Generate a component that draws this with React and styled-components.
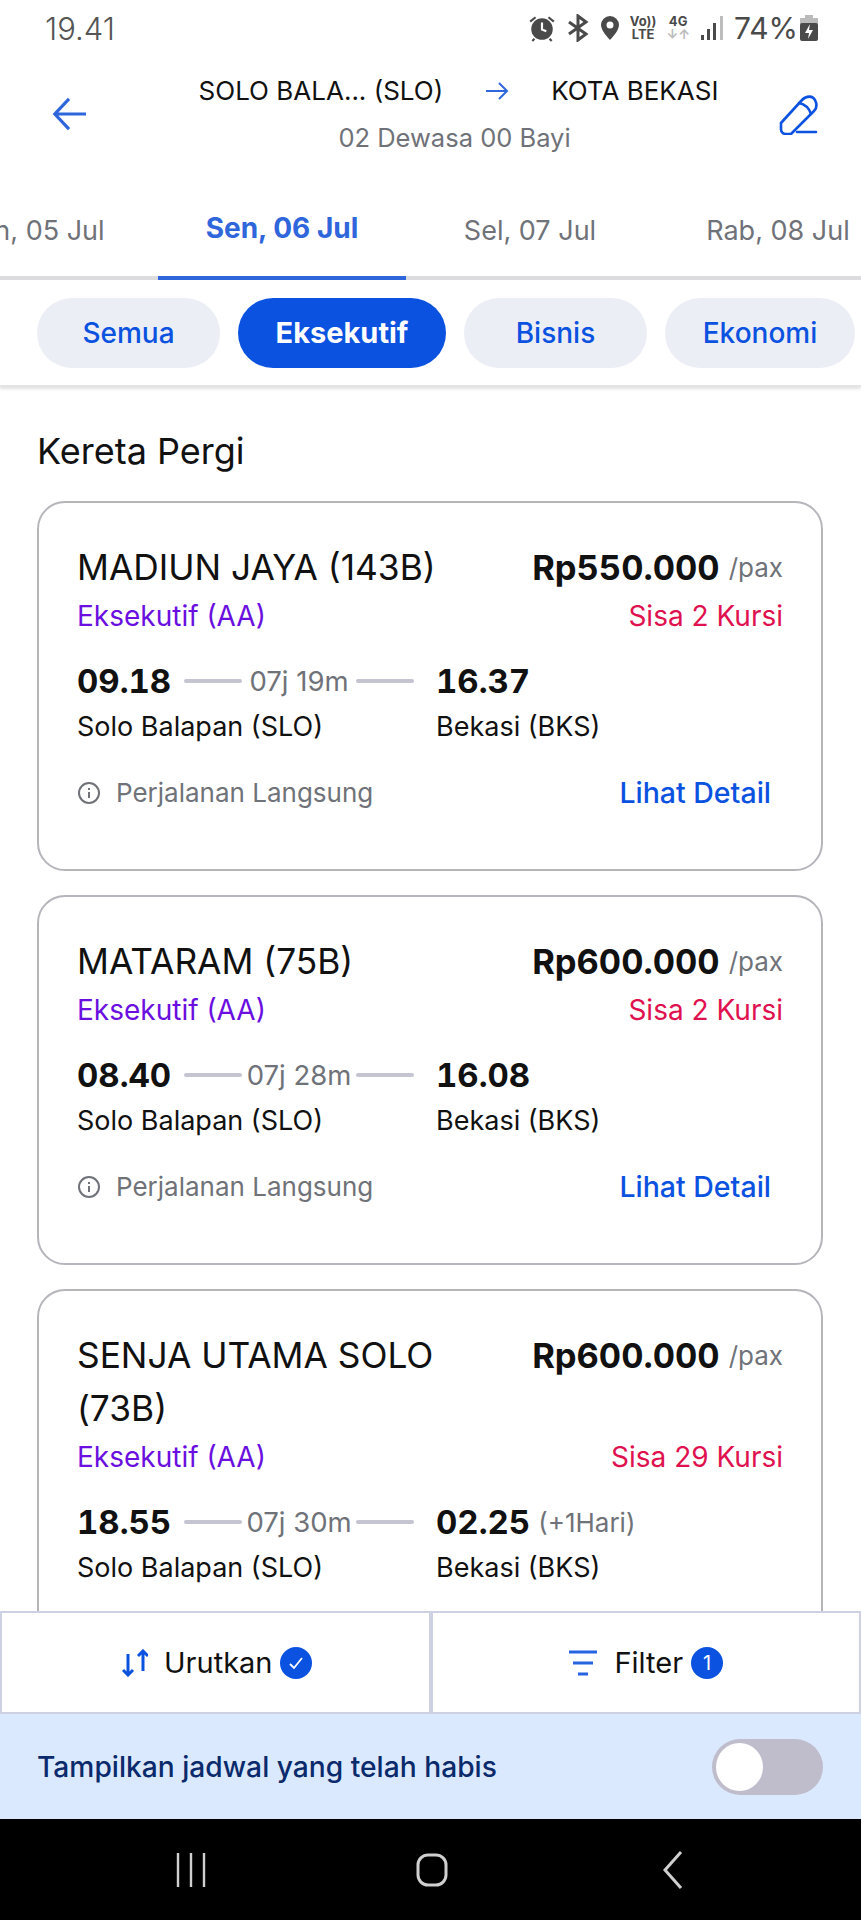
import React from 'react';
import styled, { createGlobalStyle } from 'styled-components';

const GlobalStyle = createGlobalStyle`
  * { box-sizing: border-box; }
  html, body { margin: 0; padding: 0; background: #fff; }
  body { font-family: 'Inter', 'Liberation Sans', sans-serif; }
`;

const trains = [
  { name: 'MADIUN JAYA (143B)', price: 'Rp550.000', seats: 'Sisa 2 Kursi', dep: '09.18', dur: '07j 19m', arr: '16.37', foot: true },
  { name: 'MATARAM (75B)', price: 'Rp600.000', seats: 'Sisa 2 Kursi', dep: '08.40', dur: '07j 28m', arr: '16.08', foot: true },
  // last card runs under the bottom bar, its footer is never on screen
  { name: 'SENJA UTAMA SOLO (73B)', price: 'Rp600.000', seats: 'Sisa 29 Kursi', dep: '18.55', dur: '07j 30m', arr: '02.25', next: '(+1Hari)' },
];

const App = () => (
  <Screen>
    <GlobalStyle />
    <StatusBar>
      <Clock>19.41</Clock>
      <StatusIcons>
        <svg width="28" height="28" viewBox="0 0 26 26" fill="#4a4a4a">
          <circle cx="13" cy="14" r="10" />
          <path d="M13 8v6.5l4 1.5" stroke="#fff" strokeWidth="2" fill="none" />
          <path d="M2 7l5-4M24 7l-5-4M6 23l-2 2M20 23l2 2" stroke="#4a4a4a" strokeWidth="2" />
        </svg>
        <svg width="24" height="28" viewBox="0 0 24 28" fill="none" stroke="#4a4a4a" strokeWidth="3">
          <path d="M3 8l17 12-8 6V2l8 6L3 20" />
        </svg>
        <svg width="20" height="26" viewBox="0 0 20 26">
          <path fillRule="evenodd" fill="#4a4a4a" d="M10 1a9 9 0 0 1 9 9c0 6-9 15-9 15S1 16 1 10a9 9 0 0 1 9-9zm0 5.5a3.5 3.5 0 1 0 0 7 3.5 3.5 0 0 0 0-7z" />
        </svg>
        <NetLabel>Vo))<br />LTE</NetLabel>
        <NetLabel>4G<Faint><br />↓↑</Faint></NetLabel>
        <svg width="24" height="24" viewBox="0 0 24 24">
          <rect x="1" y="19" width="3" height="5" fill="#4a4a4a" />
          <rect x="7" y="13" width="3" height="11" fill="#4a4a4a" />
          <rect x="13" y="7" width="3" height="17" fill="#4a4a4a" />
          <rect x="20" y="0" width="3" height="24" fill="#bdbdbd" />
        </svg>
        <Percent>74%</Percent>
        <svg width="18" height="26" viewBox="0 0 18 26">
          <rect x="5" y="0" width="8" height="4" fill="#bbb" />
          <rect x="0" y="3" width="18" height="6" fill="#bbb" />
          <rect x="0" y="8" width="18" height="18" rx="2" fill="#4a4a4a" />
          <path d="M10 9l-5 9h4l-1 6 5-9H9z" fill="#fff" />
        </svg>
      </StatusIcons>
    </StatusBar>

    <Header>
      <IconSlot>
        <svg width="34" height="34" viewBox="0 0 36 36" fill="none" stroke="#2f66dc" strokeWidth="3.4">
          <path d="M18 2L3 18l15 16M3 18h33" />
        </svg>
      </IconSlot>
      <HeaderCenter>
        <RouteRow>
          <RouteFrom>SOLO BALA... (SLO)</RouteFrom>
          <svg width="24" height="20" viewBox="0 0 24 20" fill="none" stroke="#2f66dc" strokeWidth="2">
            <path d="M14 2l8 8-8 8M1 10h21" />
          </svg>
          <RouteTo>KOTA BEKASI</RouteTo>
        </RouteRow>
        <Passengers>02 Dewasa 00 Bayi</Passengers>
      </HeaderCenter>
      <IconSlot>
        <svg width="40" height="42" viewBox="10 8 40 42" fill="none" stroke="#0b52e0" strokeWidth="2.6" strokeLinecap="round">
          <path d="M12 38L33 15C38 10 44 11 46 15C48 19 48 23 45 26L22 49H17C14 49 12 47 12 44Z" />
          <path d="M30 18C35 19 40 23 42 29M28 47H47" />
        </svg>
      </IconSlot>
    </Header>

    <DateTabs>
      <DateTab>Min, 05 Jul</DateTab>
      <DateTab $active>Sen, 06 Jul</DateTab>
      <DateTab>Sel, 07 Jul</DateTab>
      <DateTab>Rab, 08 Jul</DateTab>
    </DateTabs>

    <Chips>
      <Chip $w={183}>Semua</Chip>
      <Chip $w={208} $active>Eksekutif</Chip>
      <Chip $w={183}>Bisnis</Chip>
      <Chip $w={190}>Ekonomi</Chip>
    </Chips>

    <Content>
      <SectionTitle>Kereta Pergi</SectionTitle>
      {trains.map((t) => (
        <Card key={t.name}>
          <TopRow>
            <TrainName>{t.name}</TrainName>
            <PriceBox>
              <Price>{t.price}</Price>
              <Pax>/pax</Pax>
            </PriceBox>
          </TopRow>
          <ClassRow>
            <ClassName>Eksekutif (AA)</ClassName>
            <Seats>{t.seats}</Seats>
          </ClassRow>
          <TimeRow>
            <Time>{t.dep}</Time>
            <Line />
            <Duration>{t.dur}</Duration>
            <Line />
            <Arrival>{t.arr}</Arrival>
            {t.next && <NextDay>{t.next}</NextDay>}
          </TimeRow>
          <StationRow>
            <DepStation>Solo Balapan (SLO)</DepStation>
            <span>Bekasi (BKS)</span>
          </StationRow>
          {t.foot && (
            <FootRow>
              <Direct>
                <svg width="24" height="24" viewBox="0 0 24 24" fill="none" stroke="#6f7278" strokeWidth="2">
                  <circle cx="12" cy="12" r="10" />
                  <path d="M12 11v6M12 7v2" />
                </svg>
                Perjalanan Langsung
              </Direct>
              <DetailLink>Lihat Detail</DetailLink>
            </FootRow>
          )}
        </Card>
      ))}
    </Content>

    <ActionBar>
      <ActionButton $shift={4}>
        <svg width="26" height="28" viewBox="0 0 26 28" fill="none" stroke="#0b52e0" strokeWidth="3">
          <path d="M6 5v21M1 21l5 5 5-5M21 22V2M16 7l5-5 5 5" />
        </svg>
        <ActionLabel>Urutkan</ActionLabel>
        <Badge>
          <svg width="16" height="16" viewBox="0 0 16 16" fill="none" stroke="#fff" strokeWidth="1.8">
            <path d="M2 9l4 4 8-10" />
          </svg>
        </Badge>
      </ActionButton>
      <ActionButton>
        <svg width="30" height="26" viewBox="0 0 30 26" fill="none" stroke="#2563e0" strokeWidth="3">
          <path d="M1 2h28M5 13h20M10 24h10" />
        </svg>
        <ActionLabel>Filter</ActionLabel>
        <Badge>1</Badge>
      </ActionButton>
    </ActionBar>

    <ToggleBar>
      <ToggleLabel>Tampilkan jadwal yang telah habis</ToggleLabel>
      <Switch><Knob /></Switch>
    </ToggleBar>

    <NavBar>
      <svg width="32" height="36" viewBox="0 0 32 36" fill="none" stroke="#cfcfcf" strokeWidth="2.4">
        <path d="M3 1v34M16 1v34M29 1v34" />
      </svg>
      <HomeIcon width="32" height="36" viewBox="0 0 32 36" fill="none" stroke="#cfcfcf" strokeWidth="3">
        <rect x="2" y="3" width="28" height="30" rx="10" />
      </HomeIcon>
      <svg width="20" height="38" viewBox="0 0 20 38" fill="none" stroke="#cfcfcf" strokeWidth="3">
        <path d="M18 1L2 19l16 18" />
      </svg>
    </NavBar>
  </Screen>
);

export default App;

const Screen = styled.div`
  width: 861px;
  height: 1920px;
  display: flex;
  flex-direction: column;
  overflow: hidden;
  background: #fff;
  color: #111;
`;

const StatusBar = styled.div`
  height: 56px;
  flex: none;
  padding: 0 43px 0 45px;
  display: flex;
  align-items: center;
  justify-content: space-between;
`;

const Clock = styled.span`
  font-size: 31px;
  color: #555;
  font-weight: 300;
`;

const StatusIcons = styled.div`
  display: flex;
  align-items: center;
  gap: 10px;
`;

const NetLabel = styled.span`
  font-size: 13px;
  line-height: 13px;
  font-weight: 700;
  color: #4a4a4a;
  text-align: center;
`;

const Faint = styled.span`
  color: #bbb;
`;

const Percent = styled.span`
  font-size: 30px;
  color: #4a4a4a;
  margin-right: -8px;
`;

const Header = styled.div`
  height: 116px;
  flex: none;
  padding: 0 42px 0 52px;
  display: flex;
  align-items: center;
  justify-content: space-between;
`;

const IconSlot = styled.div`
  display: flex;
  align-items: center;
`;

const HeaderCenter = styled.div`
  display: flex;
  flex-direction: column;
  align-items: center;
  gap: 16px;
  padding-left: 52px;
`;

const RouteRow = styled.div`
  display: flex;
  align-items: center;
  font-size: 26px;
  color: #111;
`;

const RouteFrom = styled.span`
  margin-right: 42px;
`;

const RouteTo = styled.span`
  margin-left: 42px;
`;

const Passengers = styled.div`
  font-size: 25.5px;
  color: #6f7278;
  margin-right: 8px;
`;

const DateTabs = styled.div`
  height: 108px;
  flex: none;
  display: flex;
  margin-left: -90px;
  width: 1000px;
  border-bottom: 4px solid #dcdcdf;
`;

const DateTab = styled.div`
  width: 248px;
  height: 108px;
  flex: none;
  display: flex;
  align-items: center;
  justify-content: center;
  padding-top: 8px;
  font-size: ${(p) => (p.$active ? '28px' : '27px')};
  color: ${(p) => (p.$active ? '#2f66dc' : '#6f7278')};
  font-weight: ${(p) => (p.$active ? 700 : 400)};
  border-bottom: ${(p) => (p.$active ? '4px solid #2f66dc' : 'none')};
`;

const Chips = styled.div`
  height: 107px;
  flex: none;
  display: flex;
  align-items: center;
  gap: 18px;
  padding: 0 0 0 37px;
  border-bottom: 2px solid #e4e4e6;
  box-shadow: 0 2px 3px rgba(0, 0, 0, 0.12);
  position: relative;
`;

const Chip = styled.div`
  width: ${(p) => p.$w}px;
  height: 70px;
  flex: none;
  border-radius: 35px;
  display: flex;
  align-items: center;
  justify-content: center;
  font-size: ${(p) => (p.$active ? '29px' : '28px')};
  font-weight: ${(p) => (p.$active ? 700 : 500)};
  color: ${(p) => (p.$active ? '#fff' : '#0b52e0')};
  background: ${(p) => (p.$active ? '#0b52e0' : '#eceef5')};
`;

const Content = styled.div`
  flex: 1;
  min-height: 0;
  overflow: hidden;
  padding: 0 38px 0 37px;
`;

const SectionTitle = styled.div`
  height: 114px;
  padding-top: 13px;
  display: flex;
  align-items: center;
  font-size: 36px;
  font-weight: 400;
  color: #111;
`;

const Card = styled.div`
  border: 2px solid #b5b5bb;
  border-radius: 28px;
  padding: 38px 38px 0;
  min-height: 370px;
  margin-bottom: 24px;
`;

const TopRow = styled.div`
  display: flex;
  justify-content: space-between;
  align-items: flex-start;
`;

const TrainName = styled.div`
  font-size: 35.3px;
  line-height: 53px;
  width: 375px;
  color: #111;
`;

const PriceBox = styled.div`
  display: flex;
  align-items: center;
  gap: 9px;
  height: 53px;
`;

const Price = styled.span`
  font-size: 34.5px;
  font-weight: 700;
  font-variant-numeric: tabular-nums;
`;

const Pax = styled.span`
  font-size: 26px;
  color: #6f7278;
`;

const ClassRow = styled.div`
  display: flex;
  justify-content: space-between;
  font-size: 28px;
  line-height: 44px;
`;

const ClassName = styled.span`
  color: #6a0fe0;
`;

const Seats = styled.span`
  color: #e0114f;
`;

const TimeRow = styled.div`
  display: flex;
  align-items: center;
  height: 48px;
  margin-top: 19px;
`;

const Time = styled.span`
  font-size: 33px;
  font-weight: 700;
  width: 107px;
  font-variant-numeric: tabular-nums;
`;

const Line = styled.span`
  width: 58px;
  height: 4px;
  border-radius: 2px;
  background: #c4c5d0;
`;

const Duration = styled.span`
  font-size: 27.5px;
  color: #6f7278;
  width: 114px;
  text-align: center;
`;

const Arrival = styled.span`
  font-size: 33px;
  font-weight: 700;
  margin-left: 22px;
  font-variant-numeric: tabular-nums;
`;

const NextDay = styled.span`
  font-size: 26px;
  color: #6f7278;
  margin-left: 8px;
`;

const StationRow = styled.div`
  display: flex;
  font-size: 27px;
  line-height: 44px;
  color: #111;
`;

const DepStation = styled.span`
  width: 359px;
`;

const FootRow = styled.div`
  display: flex;
  justify-content: space-between;
  align-items: center;
  margin-top: 26px;
  padding-right: 12px;
`;

const Direct = styled.div`
  display: flex;
  align-items: center;
  gap: 15px;
  font-size: 26px;
  color: #6f7278;
`;

const DetailLink = styled.span`
  font-size: 28.5px;
  font-weight: 500;
  color: #0b52e0;
`;

const ActionBar = styled.div`
  height: 103px;
  flex: none;
  display: flex;
  border-top: 2px solid #ced1e2;
  border-bottom: 2px solid #ced1e2;
  background: #fff;
`;

const ActionButton = styled.div`
  width: 50%;
  flex: none;
  display: flex;
  align-items: center;
  justify-content: center;
  gap: 16px;
  padding-left: ${(p) => p.$shift || 0}px;
  border-left: 2px solid #ced1e2;
  border-right: 2px solid #ced1e2;
`;

const ActionLabel = styled.span`
  font-size: 29px;
  font-weight: 400;
  color: #111;
`;

const Badge = styled.span`
  width: 32px;
  height: 32px;
  margin-left: -8px;
  border-radius: 50%;
  background: #0b52e0;
  color: #fff;
  font-size: 20px;
  display: flex;
  align-items: center;
  justify-content: center;
`;

const ToggleBar = styled.div`
  height: 105px;
  flex: none;
  padding: 0 38px 0 37px;
  display: flex;
  align-items: center;
  justify-content: space-between;
  background: #dbe9fe;
`;

const ToggleLabel = styled.span`
  font-size: 28.2px;
  font-weight: 500;
  color: #0a2a6b;
`;

const Switch = styled.div`
  width: 111px;
  height: 56px;
  border-radius: 28px;
  background: #bfbdcb;
  padding: 4px;
`;

const Knob = styled.div`
  width: 47px;
  height: 48px;
  border-radius: 50%;
  background: #fff;
`;

const NavBar = styled.div`
  height: 101px;
  flex: none;
  background: #000;
  display: flex;
  align-items: center;
  padding: 0 178px 0 175px;
  justify-content: space-between;
`;

const HomeIcon = styled.svg`
  margin-right: 6px;
`;
